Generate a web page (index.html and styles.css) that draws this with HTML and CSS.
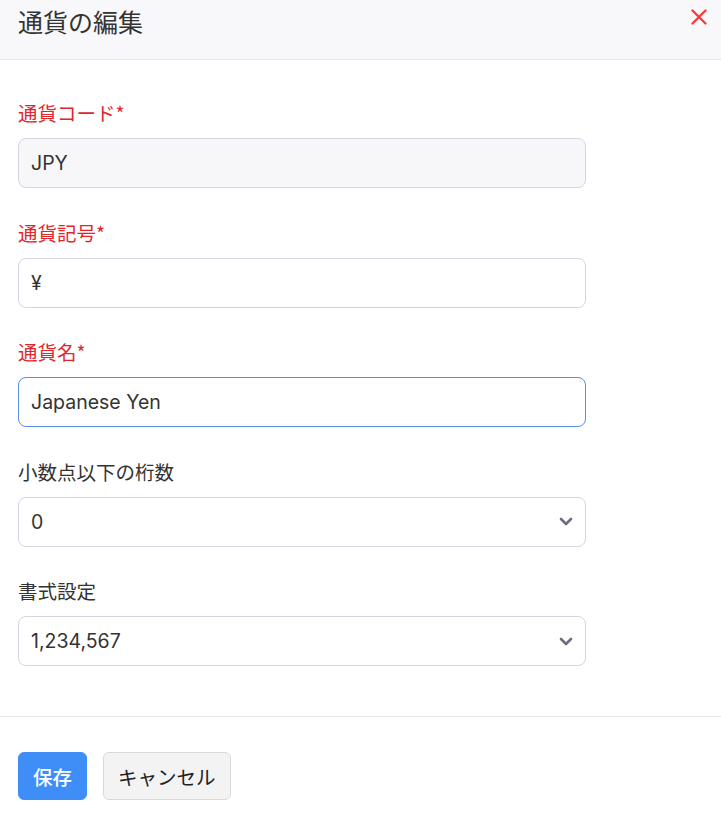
FILE: index.html
```html
<!DOCTYPE html>
<html lang="ja">
<head>
<meta charset="utf-8">
<title>通貨の編集</title>
<link rel="stylesheet" href="styles.css">
</head>
<body>
<div class="modal">
  <header class="modal-header">
    <h1 class="modal-title">通貨の編集</h1>
    <button class="close-btn" aria-label="閉じる">
      <svg width="16" height="16" viewBox="0 0 16 16"><path d="M1.5 1.5 L14.5 14.5 M14.5 1.5 L1.5 14.5" stroke="#f53d3d" stroke-width="2.4" stroke-linecap="round" fill="none"/></svg>
    </button>
  </header>
  <main class="modal-body">
    <div class="field">
      <label class="label required">通貨コード*</label>
      <input class="control disabled" value="JPY" readonly>
    </div>
    <div class="field">
      <label class="label required">通貨記号*</label>
      <input class="control" value="¥" readonly>
    </div>
    <div class="field">
      <label class="label required">通貨名*</label>
      <input class="control focused" value="Japanese Yen" readonly>
    </div>
    <div class="field">
      <label class="label">小数点以下の桁数</label>
      <div class="control select">
        <span>0</span>
        <svg class="chev" width="14" height="9" viewBox="0 0 14 9"><path d="M2 2 L7 7 L12 2" stroke="#6e6c80" stroke-width="2.6" fill="none" stroke-linecap="round" stroke-linejoin="round"/></svg>
      </div>
    </div>
    <div class="field">
      <label class="label">書式設定</label>
      <div class="control select">
        <span>1,234,567</span>
        <svg class="chev" width="14" height="9" viewBox="0 0 14 9"><path d="M2 2 L7 7 L12 2" stroke="#6e6c80" stroke-width="2.6" fill="none" stroke-linecap="round" stroke-linejoin="round"/></svg>
      </div>
    </div>
  </main>
  <footer class="modal-footer">
    <button class="btn btn-primary">保存</button>
    <button class="btn btn-secondary">キャンセル</button>
  </footer>
</div>
</body>
</html>
```

FILE: styles.css
```css
* { box-sizing: border-box; }
html, body { margin: 0; padding: 0; background: #fff; }
body {
  font-family: Inter, "Noto Sans CJK JP", sans-serif;
  color: #333;
  width: 721px;
  height: 820px;
  overflow: hidden;
}
.modal { display: flex; flex-direction: column; }
.modal-header {
  height: 60px;
  background: #f8f8fa;
  border-bottom: 1px solid #e6e6ea;
  display: flex;
  align-items: flex-start;
  justify-content: space-between;
  padding: 5px 14px 0 18px;
}
.modal-title {
  margin: 0;
  font-family: "Noto Sans CJK JP", sans-serif;
  font-weight: 400;
  font-size: 25px;
  line-height: 32px;
  color: #333;
}
.close-btn {
  border: 0;
  background: transparent;
  padding: 0;
  margin-top: 4px;
  width: 16px;
  height: 16px;
  display: flex;
}
.modal-body {
  padding: 39px 18px 50px;
  display: flex;
  flex-direction: column;
  gap: 30.5px;
}
.field { display: flex; flex-direction: column; gap: 11px; width: 568px; }
.label {
  font-family: "Noto Sans CJK JP", sans-serif;
  font-size: 19.5px;
  line-height: 28px;
  color: #333;
}
.label.required { color: #e0262d; }
.control {
  height: 50px;
  width: 100%;
  border: 1px solid #d6d4e2;
  border-radius: 8px;
  padding: 0 12px;
  font-family: Inter, "Noto Sans CJK JP", sans-serif;
  font-size: 19.5px;
  color: #333;
  background: #fff;
  outline: none;
  margin: 0;
}
.control.disabled { background: #f7f7fa; }
.control.focused { border-color: #5a8ee8; }
.select {
  display: flex;
  align-items: center;
  justify-content: space-between;
  padding-right: 12px;
}
.chev { display: block; }
.modal-footer {
  border-top: 1px solid #e8e8ea;
  padding: 35px 18px 20px;
  display: flex;
  gap: 16px;
}
.btn {
  height: 48px;
  border-radius: 6px;
  font-family: "Noto Sans CJK JP", sans-serif;
  font-size: 19.5px;
  padding: 0 14px;
  cursor: pointer;
}
.btn-primary {
  background: #3f8ef8;
  color: #fff;
  border: 1px solid #3f8ef8;
  font-weight: 500;
}
.btn-secondary {
  background: #f3f3f3;
  color: #222;
  border: 1px solid #d9d9d9;
}
```
